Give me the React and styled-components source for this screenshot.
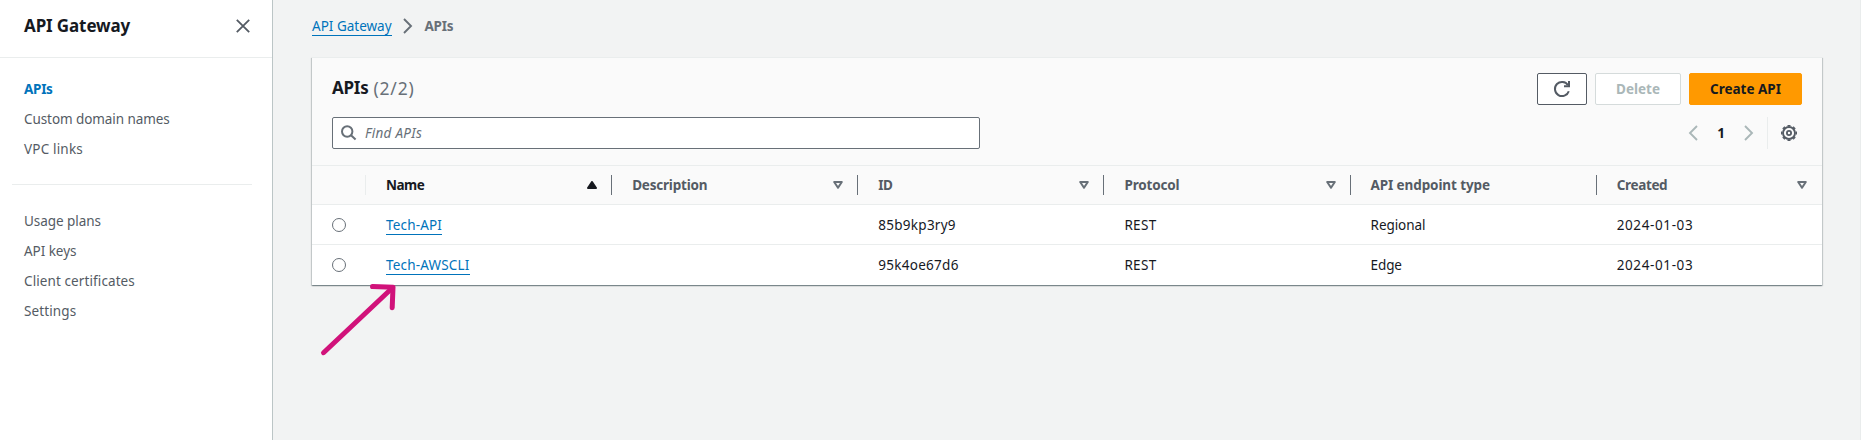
import React from "react";
import styled, { createGlobalStyle } from "styled-components";

const c = {
  text: "#16191f",
  secondary: "#545b64",
  muted: "#687078",
  disabled: "#aab7b8",
  link: "#0073bb",
  line: "#eaeded",
  canvas: "#f2f3f3",
  header: "#fafafa",
  orange: "#ff9900",
  arrow: "#d1127a",
};

const GlobalStyle = createGlobalStyle`
  *, *::before, *::after { box-sizing: border-box; }
  body {
    margin: 0;
    overflow: hidden;
    background: ${c.canvas};
    color: ${c.text};
    font-family: "Noto Sans", "Open Sans", sans-serif;
    font-size: 13.5px;
    line-height: 20px;
  }
`;

const Label = styled.span`
  letter-spacing: ${(p) => p.$track || 0}px;
  white-space: nowrap;
`;

const Page = styled.div`
  display: flex;
  height: 440px;
  border-right: 1px solid #e9ecec;
`;

const Sidebar = styled.aside`
  flex: 0 0 273px;
  background: #fff;
  border-right: 1px solid #bcc5c6;
`;

const SidebarHeader = styled.div`
  display: flex;
  align-items: center;
  justify-content: space-between;
  height: 58px;
  padding: 0 22px 6px 24px;
  border-bottom: 1px solid ${c.line};
`;

const ServiceTitle = styled.h2`
  margin: 0;
  font-size: 17px;
  line-height: 22px;
  font-weight: 700;
  letter-spacing: -0.12px;
`;

const NavGroup = styled.nav`
  display: flex;
  flex-direction: column;
  gap: 10px;
  margin: 0 20px 0 12px;
  padding: ${(p) => (p.$divided ? "26px 12px 0" : "21px 12px 25px")};
  ${(p) => (p.$divided ? `border-top: 1px solid ${c.line};` : "")}
`;

const NavItem = styled.a`
  height: 20px;
  color: ${(p) => (p.$active ? c.link : c.secondary)};
  font-weight: ${(p) => (p.$active ? 700 : 400)};
`;

const Main = styled.main`
  flex: 1;
  min-width: 0;
  padding: 16px 38px 0 39px;
`;

const Breadcrumbs = styled.div`
  display: flex;
  align-items: center;
  height: 20px;
  margin-bottom: 21px;
  color: ${c.muted};
  font-weight: 700;
  svg { margin: 0 12px 0 11px; }
`;

const Link = styled.a`
  display: inline-block;
  height: 20px;
  border-bottom: 1px solid ${c.link};
  color: ${c.link};
  font-weight: 400;
`;

const Panel = styled.section`
  height: 228px;
  background: #fff;
  border-top: 1px solid ${c.line};
  box-shadow: 0 1px 1px 0 rgba(0, 28, 36, 0.3), 1px 1px 1px 0 rgba(0, 28, 36, 0.15), -1px 1px 1px 0 rgba(0, 28, 36, 0.15);
`;

const PanelHeader = styled.div`
  display: flex;
  flex-direction: column;
  gap: 12px;
  height: 108px;
  padding: 15px 20px 0;
  background: ${c.header};
  border-bottom: 1px solid ${c.line};
`;

const Bar = styled.div`
  display: flex;
  align-items: center;
  justify-content: space-between;
  height: 32px;
`;

const PanelTitle = styled.h1`
  display: flex;
  gap: 5px;
  margin: 0 0 2px;
  font-size: 17px;
  line-height: 22px;
  font-weight: 700;
`;

const Count = styled.span`
  color: ${c.muted};
  font-weight: 400;
  font-size: 17.5px;
  letter-spacing: 0.8px;
`;

const Actions = styled.div`
  display: flex;
  gap: 8px;
`;

const variants = {
  normal: `border-color: ${c.secondary}; color: ${c.secondary}; background: #fff;`,
  disabled: `border-color: #d5dbdb; color: ${c.disabled}; background: #fff;`,
  primary: `border-color: ${c.orange}; color: ${c.text}; background: ${c.orange};`,
};

const Button = styled.button`
  display: flex;
  align-items: center;
  justify-content: center;
  width: ${(p) => p.$width}px;
  height: 32px;
  padding: 0;
  border: 1px solid;
  border-radius: 2px;
  font: inherit;
  font-weight: 700;
  ${(p) => variants[p.$variant]}
`;

const Search = styled.div`
  display: flex;
  align-items: center;
  gap: 8px;
  width: 648px;
  height: 32px;
  padding-left: 8px;
  border: 1px solid ${c.muted};
  border-radius: 2px;
  background: #fff;
  color: ${c.muted};
  font-style: italic;
`;

const Pager = styled.div`
  display: flex;
  align-items: center;
  height: 32px;
  color: ${c.disabled};
`;

const PageNumber = styled.span`
  width: 46px;
  text-align: center;
  color: ${c.text};
  font-weight: 700;
`;

const Preferences = styled.div`
  display: flex;
  align-items: center;
  height: 32px;
  margin-left: 13px;
  padding: 0 5px 0 13px;
  border-left: 1px solid ${c.line};
  color: ${c.secondary};
`;

const Row = styled.div`
  display: grid;
  grid-template-columns: 54px repeat(5, 246.15px) 1fr;
  align-items: center;
  height: ${(p) => p.$height}px;
  background: ${(p) => (p.$head ? c.header : "#fff")};
  border-bottom: ${(p) => (p.$last ? "0" : `1px solid ${c.line}`)};
`;

const HeadCell = styled.div`
  display: flex;
  align-items: center;
  justify-content: space-between;
  height: 20px;
  padding: 0 ${(p) => (p.$edge ? 14 : 15)}px 0 20px;
  border-right: ${(p) => (p.$edge ? `1px solid ${p.$edge}` : "0")};
  color: ${(p) => (p.$sorted ? c.text : c.secondary)};
  font-weight: 700;
`;

const Cell = styled.div`
  padding-left: 20px;
`;

const Radio = styled.span`
  display: block;
  width: 14px;
  height: 14px;
  border: 1px solid ${c.muted};
  border-radius: 50%;
  background: #fff;
`;

const Pointer = styled.svg`
  position: absolute;
  left: 312px;
  top: 276px;
  pointer-events: none;
`;

const CloseIcon = () => (
  <svg width="14" height="14" viewBox="0 0 14 14" fill="none" stroke={c.secondary} strokeWidth="1.8">
    <path d="M.8.8l12.4 12.4M13.2.8L.8 13.2" />
  </svg>
);

const Chevron = ({ left, tone = "currentColor", w = 10 }) => (
  <svg width={w} height="16" viewBox="0 0 10 16" fill="none" stroke={tone} strokeWidth="1.9">
    <path d={left ? "M9 1L2 8l7 7" : "M1 1l7 7-7 7"} />
  </svg>
);

const SearchIcon = () => (
  <svg width="16" height="16" viewBox="0 0 16 16" fill="none" stroke={c.muted} strokeWidth="2">
    <circle cx="6.2" cy="6.5" r="5.2" />
    <path d="M10 10.3l4.6 4.3" />
  </svg>
);

const RefreshIcon = () => (
  <svg width="18" height="18" viewBox="0 0 18 18" fill="none" stroke={c.secondary} strokeWidth="2">
    <path d="M15.8 11.2a7.1 7.1 0 1 1-.8-6.1" />
    <path d="M16 1v5.2h-5" />
  </svg>
);

const teeth = Array.from({ length: 8 }, (_, i) => i * 45);
const GearIcon = () => (
  <svg width="16" height="16" viewBox="0 0 16 16" fill="none" stroke={c.secondary}>
    <circle cx="8" cy="8" r="6" strokeWidth="1.9" />
    <circle cx="8" cy="8" r="2.1" strokeWidth="1.8" />
    {teeth.map((a) => (
      <path key={a} d="M6.5 .7h3" strokeWidth="1.4" transform={`rotate(${a} 8 8)`} />
    ))}
  </svg>
);

const SortIcon = ({ up }) => (
  <svg width="10" height="8" viewBox="0 0 10 8" strokeWidth="2" strokeLinejoin="round">
    {up ? (
      <path d="M5 1L9 7H1z" fill={c.text} stroke={c.text} />
    ) : (
      <path d="M1.2 1h7.6L5 6.8z" fill="none" stroke={c.muted} />
    )}
  </svg>
);

const primaryNav = [["APIs", -0.3, true], ["Custom domain names", -0.08], ["VPC links", 0.18]];
const secondaryNav = [["Usage plans", -0.06], ["API keys", -0.05], ["Client certificates", 0.1], ["Settings", 0.12]];

const columns = [
  { name: "Name", track: -0.5, sort: "up" },
  { name: "Description", track: -0.2, sort: "down" },
  { name: "ID", track: -0.6, sort: "down" },
  { name: "Protocol", track: -0.16, sort: "down" },
  { name: "API endpoint type", track: -0.11 },
  { name: "Created", track: -0.35, sort: "down" },
];

const apis = [
  { name: ["Tech-API", 0.16], id: ["85b9kp3ry9", 0.27], type: ["Regional", -0.06] },
  { name: ["Tech-AWSCLI", 0.18], id: ["95k4oe67d6", 0.28], type: ["Edge", -0.1] },
];

const renderNav = ([name, track, active]) => (
  <NavItem key={name} $active={active}>
    <Label $track={track}>{name}</Label>
  </NavItem>
);

export default function App() {
  return (
    <>
      <GlobalStyle />
      <Page>
        <Sidebar>
          <SidebarHeader>
            <ServiceTitle>API Gateway</ServiceTitle>
            <CloseIcon />
          </SidebarHeader>
          <NavGroup>{primaryNav.map(renderNav)}</NavGroup>
          <NavGroup $divided>{secondaryNav.map(renderNav)}</NavGroup>
        </Sidebar>
        <Main>
          <Breadcrumbs>
            <Link>API Gateway</Link>
            <Chevron tone={c.muted} />
            <Label $track={-0.3}>APIs</Label>
          </Breadcrumbs>
          <Panel>
            <PanelHeader>
              <Bar>
                <PanelTitle>
                  <Label $track={-0.25}>APIs</Label>
                  <Count>(2/2)</Count>
                </PanelTitle>
                <Actions>
                  <Button $variant="normal" $width={50} aria-label="Refresh">
                    <RefreshIcon />
                  </Button>
                  <Button $variant="disabled" $width={86}>Delete</Button>
                  <Button $variant="primary" $width={113}>Create API</Button>
                </Actions>
              </Bar>
              <Bar>
                <Search>
                  <SearchIcon />
                  <Label $track={0.28}>Find APIs</Label>
                </Search>
                <Pager>
                  <Chevron left />
                  <PageNumber>1</PageNumber>
                  <Chevron />
                  <Preferences>
                    <GearIcon />
                  </Preferences>
                </Pager>
              </Bar>
            </PanelHeader>
            <Row $head $height={39}>
              <HeadCell $edge={c.line} />
              {columns.map((col, i) => (
                <HeadCell key={col.name} $sorted={col.sort === "up"} $edge={i < columns.length - 1 && c.muted}>
                  <Label $track={col.track}>{col.name}</Label>
                  {col.sort && <SortIcon up={col.sort === "up"} />}
                </HeadCell>
              ))}
            </Row>
            {apis.map((api, i) => (
              <Row key={api.id[0]} $height={40} $last={i === apis.length - 1}>
                <Cell><Radio /></Cell>
                <Cell><Link><Label $track={api.name[1]}>{api.name[0]}</Label></Link></Cell>
                <Cell />
                <Cell><Label $track={api.id[1]}>{api.id[0]}</Label></Cell>
                <Cell><Label $track={0.3}>REST</Label></Cell>
                <Cell><Label $track={api.type[1]}>{api.type[0]}</Label></Cell>
                <Cell><Label $track={0.61}>2024-01-03</Label></Cell>
              </Row>
            ))}
          </Panel>
        </Main>
      </Page>
      <Pointer width="90" height="84" viewBox="312 276 90 84" fill="none" stroke={c.arrow} strokeWidth="5" strokeLinecap="round" strokeLinejoin="round">
        <path d="M323.5 352.7L392.5 287.7" />
        <path d="M372.5 286.5L393 287.2L392.2 307.7" />
      </Pointer>
    </>
  );
}
